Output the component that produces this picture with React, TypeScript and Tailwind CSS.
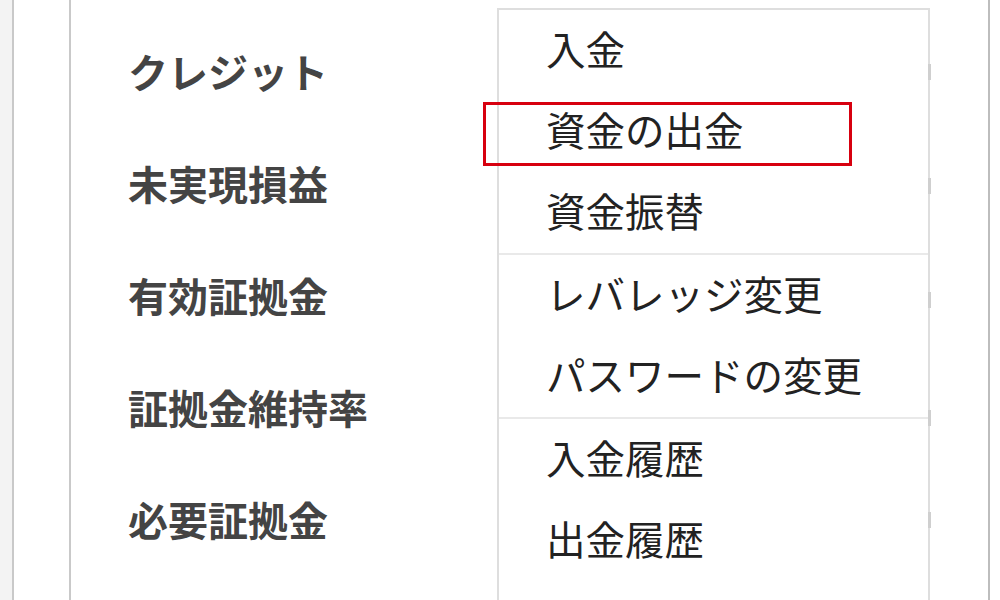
import React from "react";

const labels = ["クレジット", "未実現損益", "有効証拠金", "証拠金維持率", "必要証拠金"];
const groups = [
  ["入金", "資金の出金", "資金振替"],
  ["レバレッジ変更", "パスワードの変更"],
  ["入金履歴", "出金履歴"],
];
const ticks = [64, 178, 292, 410, 512];

export default function App() {
  return (
    <div
      className="relative flex w-[1000px] h-[600px] overflow-hidden bg-white"
      style={{ fontFamily: '"Noto Sans CJK JP", "Noto Sans", sans-serif' }}
    >
      <div className="w-[12px] h-full bg-[#f3f3f3]" />
      <div className="w-[2px] h-full bg-[#c9c9c9]" />
      <div className="w-[55px] h-full bg-white" />
      <div className="w-[2px] h-full bg-[#c9c9c9]" />
      <div className="flex-1 h-full bg-white pl-[57px] pt-[15px] flex flex-col">
        {labels.map((l) => (
          <div
            key={l}
            className="h-[112px] flex items-center text-[40px] font-bold text-[#444444] leading-none"
          >
            {l}
          </div>
        ))}
      </div>
      <div className="w-[2px] h-full bg-[#bdbdbd]" />
      <div className="w-[10px] h-full bg-white" />

      <div className="absolute left-[497px] top-[8px] w-[433px] h-[620px] border-2 border-[#dedede] bg-white flex flex-col">
        {groups.map((g, gi) => (
          <div
            key={gi}
            className={gi > 0 ? "border-t-2 border-[#e9e9e9] flex flex-col" : "flex flex-col"}
          >
            {g.map((item) => (
              <div
                key={item}
                className="h-[81px] flex items-center pl-[47px] pb-[6px] text-[39.5px] text-[#222222] leading-none"
              >
                {item}
              </div>
            ))}
          </div>
        ))}
      </div>

      {ticks.map((t) => (
        <div
          key={t}
          className="absolute left-[928px] w-[3px] h-[16px] bg-[#cfcfcf]"
          style={{ top: t }}
        />
      ))}

      <div className="absolute left-[483px] top-[102px] w-[369px] h-[64px] border-[3px] border-[#d7000f]" />
    </div>
  );
}
